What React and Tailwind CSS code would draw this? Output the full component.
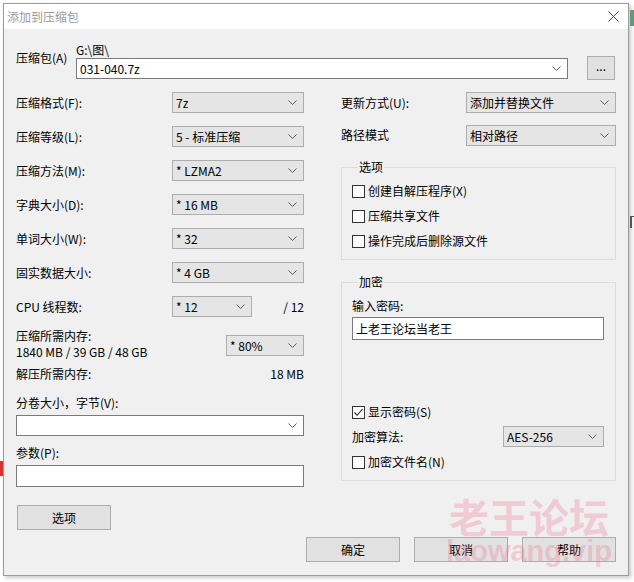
import React from "react";

/* ─── Small pieces ───────────────────────────────────────────────────────── */
const Chevron = () => (
  <svg width="9" height="5" viewBox="0 0 9 5" className="shrink-0">
    <path d="M0.5 0.5 L4.5 4.5 L8.5 0.5" fill="none" stroke="#5a5a5a" strokeWidth="1" />
  </svg>
);

const Combo = ({ value, white, className = "" }) => (
  <div
    className={`flex h-[21px] items-center justify-between border pl-[3px] pr-[6px] ${
      white ? "border-[#7a7a7a] bg-white" : "border-[#adadad] bg-[#e5e5e5]"
    } ${className}`}
  >
    <span className="truncate">{value}</span>
    <Chevron />
  </div>
);

const Check = ({ checked, label }) => (
  <div className="flex h-[16px] items-center">
    <span className="mr-[3px] flex h-[13px] w-[13px] items-center justify-center border border-[#333333] bg-white">
      {checked && (
        <svg width="11" height="11" viewBox="0 0 11 11">
          <path d="M1.5 5.5 L4.2 8.3 L9.5 2" fill="none" stroke="#222" strokeWidth="1.1" />
        </svg>
      )}
    </span>
    <span>{label}</span>
  </div>
);

const Btn = ({ children, className = "" }) => (
  <div
    className={`flex h-[25px] w-[94px] items-center justify-center border border-[#adadad] bg-[#e1e1e1] ${className}`}
  >
    {children}
  </div>
);

const Row = ({ label, value }) => (
  <div className="flex h-[21px] items-center justify-between">
    <span>{label}</span>
    <Combo value={value} className="w-[132px]" />
  </div>
);

/* ─── Dialog ─────────────────────────────────────────────────────────────── */
export default function App() {
  return (
    <div className="relative h-[582px] w-[634px] overflow-hidden bg-white font-['Noto_Sans_CJK_SC',sans-serif] text-[12px] leading-[16px] text-black">
      {/* bits of the desktop behind the window */}
      <div className="absolute left-[630px] top-[10px] h-[16px] w-[4px] bg-[#5f9a7a]" />
      <div className="absolute left-[630px] top-[216px] h-[12px] w-[4px] border-l-2 border-t border-[#555]" />
      <div className="absolute left-0 top-[461px] h-[15px] w-[3px] bg-[#d9322b]" />

      <div className="ml-[3px] mt-[3px] flex h-[573px] w-[626px] flex-col border border-[#9a9a9a] bg-[#f0f0f0] shadow-[2px_2px_4px_rgba(0,0,0,0.22)]">
        {/* ── Title bar ─────────────────────────────────────────────────── */}
        <div className="flex h-[25px] items-center justify-between bg-white pl-[3px] pr-[9px]">
          <span className="text-[#9b9b9b]">添加到压缩包</span>
          <svg width="11" height="11" viewBox="0 0 11 11">
            <path d="M0.5 0.5 L10.5 10.5 M10.5 0.5 L0.5 10.5" stroke="#444" strokeWidth="1" />
          </svg>
        </div>

        {/* ── Body ──────────────────────────────────────────────────────── */}
        <div className="flex flex-1 flex-col pl-[12px] pr-[11px] pt-[13px]">
          {/* archive path */}
          <div className="flex items-start">
            <div className="w-[60px] pt-[8px]">压缩包(A)</div>
            <div className="w-[492px]">
              <div className="h-[16px]">G:\图\</div>
              <Combo value="031-040.7z" white />
            </div>
            <div className="ml-[19px] mt-[14px] flex h-[24px] w-[28px] items-center justify-center border border-[#adadad] bg-[#e1e1e1] pb-[4px]">
              ...
            </div>
          </div>

          <div className="mt-[12px] flex gap-[37px]">
            {/* ── Left column ───────────────────────────────────────────── */}
            <div className="flex w-[288px] flex-col">
              <div className="flex flex-col gap-[13px]">
                <Row label="压缩格式(F):" value="7z" />
                <Row label="压缩等级(L):" value="5 - 标准压缩" />
                <Row label="压缩方法(M):" value="* LZMA2" />
                <Row label="字典大小(D):" value="* 16 MB" />
                <Row label="单词大小(W):" value="* 32" />
                <Row label="固实数据大小:" value="* 4 GB" />
                <div className="flex h-[21px] items-center">
                  <span className="w-[156px]">CPU 线程数:</span>
                  <Combo value="* 12" className="w-[80px]" />
                  <span className="flex-1 text-right">/ 12</span>
                </div>
              </div>

              <div className="mt-[11px] flex items-start justify-between">
                <div>
                  <div>压缩所需内存:</div>
                  <div>1840 MB / 39 GB / 48 GB</div>
                </div>
                <Combo value="* 80%" className="mt-[7px] w-[78px]" />
              </div>

              <div className="mt-[6px] flex justify-between">
                <span>解压所需内存:</span>
                <span>18 MB</span>
              </div>

              <div className="mt-[13px]">分卷大小，字节(V):</div>
              <Combo value="" white className="mt-[4px]" />

              <div className="mt-[9px]">参数(P):</div>
              <div className="mt-[4px] h-[22px] border border-[#7a7a7a] bg-white" />

              <Btn className="ml-[1px] mt-[18px]">选项</Btn>
            </div>

            {/* ── Right column ──────────────────────────────────────────── */}
            <div className="flex w-[275px] flex-col">
              <div className="flex h-[21px] items-center justify-between">
                <span>更新方式(U):</span>
                <Combo value="添加并替换文件" className="w-[150px]" />
              </div>
              <div className="mt-[12px] flex h-[21px] items-center justify-between">
                <span className="-mt-[2px]">路径模式</span>
                <Combo value="相对路径" className="w-[150px]" />
              </div>

              <fieldset className="mt-[13px] border border-[#dcdcdc] pb-[10px] pl-[10px]">
                <legend className="ml-[6px] px-[1px] leading-[16px]">选项</legend>
                <div className="mt-[8px] flex flex-col gap-[9px]">
                  <Check label="创建自解压程序(X)" />
                  <Check label="压缩共享文件" />
                  <Check label="操作完成后删除源文件" />
                </div>
              </fieldset>

              <fieldset className="mt-[14px] border border-[#dcdcdc] pb-[10px] pl-[10px] pr-[11px]">
                <legend className="ml-[6px] px-[1px] leading-[16px]">加密</legend>
                <div className="mt-[8px]">输入密码:</div>
                <div className="mt-[3px] flex h-[23px] items-center border border-[#7a7a7a] bg-white pl-[3px]">
                  上老王论坛当老王
                </div>
                <div className="mt-[64px]">
                  <Check checked label="显示密码(S)" />
                </div>
                <div className="mt-[6px] flex h-[21px] items-center justify-between">
                  <span>加密算法:</span>
                  <Combo value="AES-256" className="w-[101px]" />
                </div>
                <div className="mt-[7px]">
                  <Check label="加密文件名(N)" />
                </div>
              </fieldset>
            </div>
          </div>

          {/* ── Bottom buttons ──────────────────────────────────────────── */}
          <div className="mr-[1px] mt-[7px] flex justify-end gap-[14px]">
            <Btn>确定</Btn>
            <Btn>取消</Btn>
            <Btn>帮助</Btn>
          </div>
        </div>
      </div>

      {/* watermark */}
      <div className="pointer-events-none absolute left-[446px] top-[492px] flex flex-col items-center">
        <span className="text-[40px] font-bold leading-[48px] text-[rgba(240,110,145,0.3)]">老王论坛</span>
        <span className="-mt-[6px] font-['Liberation_Sans',sans-serif] text-[29px] font-bold leading-[34px] text-[rgba(240,110,145,0.3)]">
          laowang.vip
        </span>
      </div>
    </div>
  );
}
